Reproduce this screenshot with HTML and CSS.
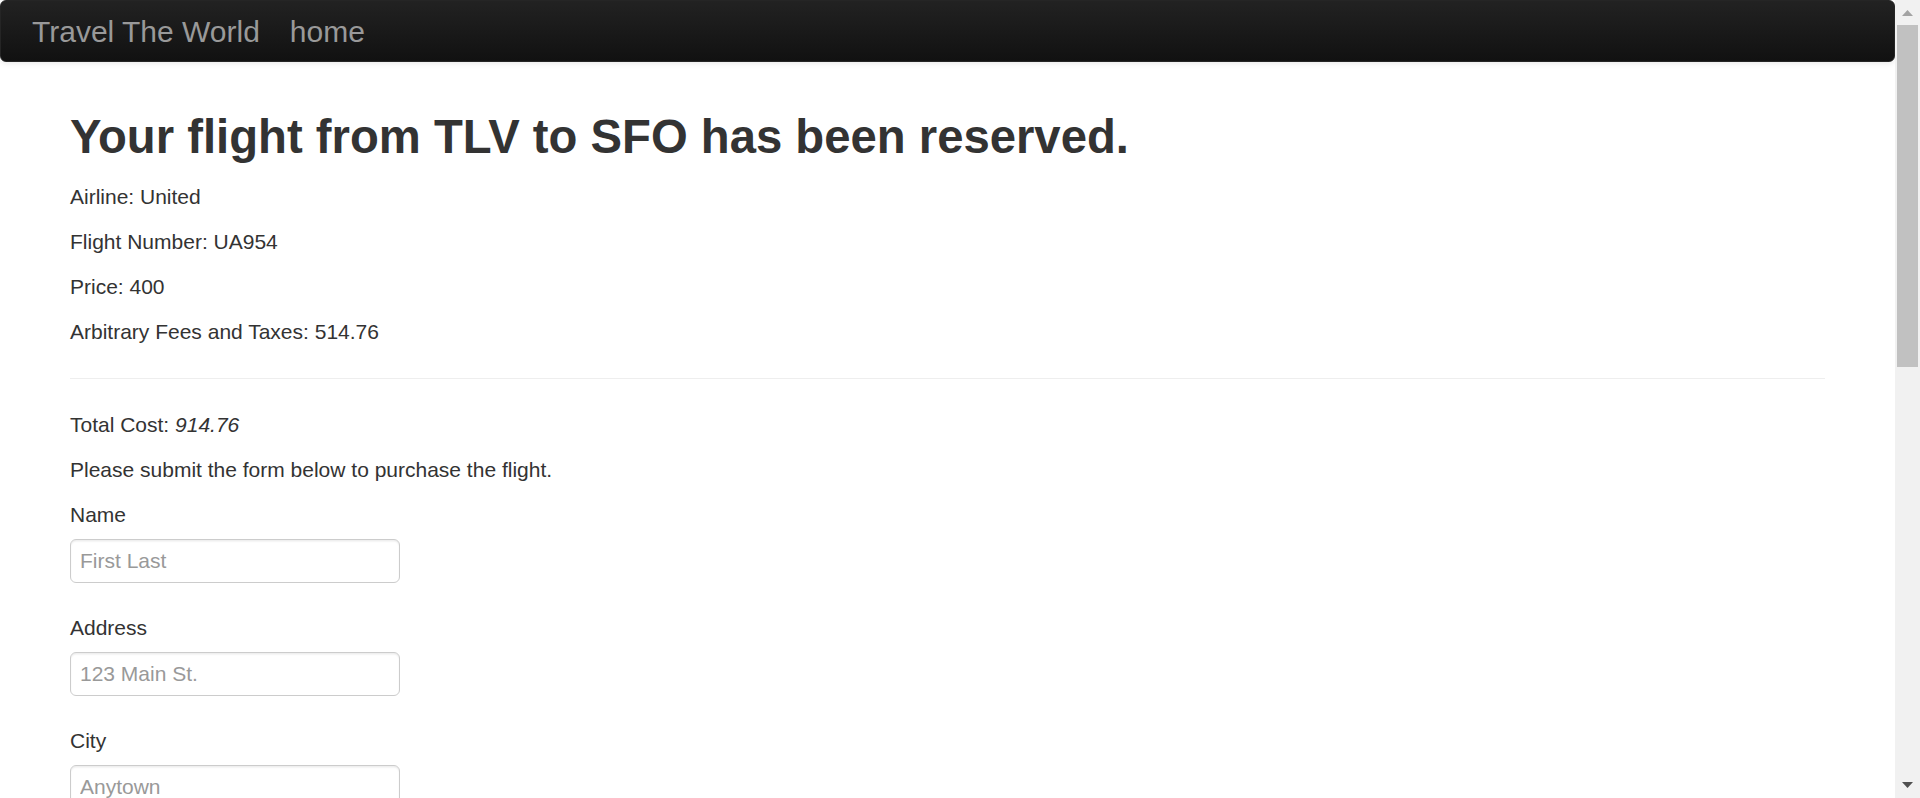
FILE: index.html
```
<!DOCTYPE html>
<html lang="en">
<head>
<meta charset="utf-8">
<title>BlazeDemo Purchase</title>
<link rel="stylesheet" href="styles.css">
</head>
<body class="page">
<div class="viewport">
  <nav class="navbar">
    <a class="brand" href="#">Travel The World</a>
    <a class="nav-link" href="#">home</a>
  </nav>
  <main class="container">
    <h2 class="title">Your flight from TLV to SFO has been reserved.</h2>
    <p class="line">Airline: United</p>
    <p class="line">Flight Number: UA954</p>
    <p class="line">Price: 400</p>
    <p class="line">Arbitrary Fees and Taxes: 514.76</p>
    <hr class="divider">
    <p class="line">Total Cost: <em>914.76</em></p>
    <p class="line">Please submit the form below to purchase the flight.</p>
    <form class="form">
      <div class="field"><label class="label" for="inputName">Name</label><input class="input" id="inputName" type="text" placeholder="First Last"></div>
      <div class="field"><label class="label" for="address">Address</label><input class="input" id="address" type="text" placeholder="123 Main St."></div>
      <div class="field"><label class="label" for="city">City</label><input class="input" id="city" type="text" placeholder="Anytown"></div>
      <div class="field"><label class="label" for="state">State</label><input class="input" id="state" type="text" placeholder="State"></div>
      <div class="field"><label class="label" for="zipCode">Zip Code</label><input class="input" id="zipCode" type="text" placeholder="12345"></div>
      <div class="field"><label class="label" for="cardType">Card Type</label><select class="input" id="cardType"><option>Visa</option><option>American Express</option><option>Diner's Club</option></select></div>
      <div class="field"><label class="label" for="creditCardNumber">Credit Card Number</label><input class="input" id="creditCardNumber" type="text" placeholder="Credit Card Number"></div>
      <div class="field"><label class="label" for="creditCardMonth">Month</label><input class="input" id="creditCardMonth" type="text" placeholder="Month" value="11"></div>
      <div class="field"><label class="label" for="creditCardYear">Year</label><input class="input" id="creditCardYear" type="text" placeholder="Year" value="2017"></div>
      <div class="field"><label class="label" for="nameOnCard">Name on Card</label><input class="input" id="nameOnCard" type="text" placeholder="John Smith"></div>
      <label class="check"><input type="checkbox" class="checkbox"> Remember me</label>
      <button class="btn" type="button">Purchase Flight</button>
    </form>
  </main>
</div>
<div class="scrollbar" aria-hidden="true">
  <div class="sb-btn"><svg class="sb-arrow" width="11" height="6" viewBox="0 0 11 6"><polygon points="5.5,0 11,6 0,6" fill="#a3a3a3"/></svg></div>
  <div class="sb-thumb"></div>
  <div class="sb-track"></div>
  <div class="sb-btn sb-btn-down"><svg class="sb-arrow" width="11" height="6" viewBox="0 0 11 6"><polygon points="0,0 11,0 5.5,6" fill="#505050"/></svg></div>
</div>
</body>
</html>
```
FILE: styles.css
```
html,
body.page {
  height: 100%;
}

body.page {
  display: flex;
  margin: 0;
  overflow: hidden;
  font-family: "Liberation Sans", Arial, sans-serif;
  font-size: 21px;
  line-height: 30px;
  color: #333;
  background: #fff;
}

.viewport {
  flex: 1;
  min-width: 0;
  overflow: hidden;
}

.navbar {
  display: flex;
  gap: 30px;
  height: 30px;
  padding: 16px 0 14px 31px;
  border: 1px solid #252525;
  border-radius: 6px;
  background: linear-gradient(to bottom, #222, #111);
  box-shadow: 0 1px 6px rgba(0, 0, 0, 0.1);
}

.brand,
.nav-link {
  font-size: 30px;
  line-height: 30px;
  color: #999;
  text-decoration: none;
}

.container {
  width: 1755px;
  margin: 0 auto;
  padding-top: 30px;
}

.title {
  margin: 15px 0;
  font-size: 47.25px;
  line-height: 60px;
  font-weight: bold;
  color: #333;
}

.line {
  margin: 0 0 15px;
}

.divider {
  height: 0;
  margin: 31px 0 30px;
  border: 0;
  border-top: 1px solid #eee;
  border-bottom: 1px solid #fff;
}

.label {
  display: block;
  margin-bottom: 9px;
}

.field {
  margin-bottom: 30px;
}

.input {
  display: block;
  box-sizing: border-box;
  width: 330px;
  height: 44px;
  margin: 0;
  padding: 0 9px;
  font-family: "Liberation Sans", Arial, sans-serif;
  font-size: 21px;
  color: #555;
  background: #fff;
  border: 1px solid #ccc;
  border-radius: 6px;
  box-shadow: inset 0 1.5px 1.5px rgba(0, 0, 0, 0.075);
  outline: none;
}

.input::placeholder {
  color: #999;
}

.check {
  display: flex;
  align-items: center;
  gap: 8px;
  margin-bottom: 15px;
}

.checkbox {
  width: 18px;
  height: 18px;
  margin: 0;
}

.btn {
  height: 45px;
  padding: 0 18px;
  font-family: "Liberation Sans", Arial, sans-serif;
  font-size: 21px;
  color: #fff;
  background: linear-gradient(to bottom, #08c, #04c);
  border: 1px solid #04c;
  border-radius: 6px;
}

.scrollbar {
  display: flex;
  flex-direction: column;
  flex: 0 0 25px;
  width: 25px;
  background: #f1f1f1;
}

.sb-btn {
  display: flex;
  justify-content: center;
  align-items: flex-start;
  height: 25px;
  padding-top: 10px;
  box-sizing: border-box;
}

.sb-btn-down {
  padding-top: 9px;
}

.sb-arrow {
  display: block;
}

.sb-thumb {
  height: 342px;
  margin: 0 2px;
  background: #c1c1c1;
}

.sb-track {
  flex: 1;
}
```
